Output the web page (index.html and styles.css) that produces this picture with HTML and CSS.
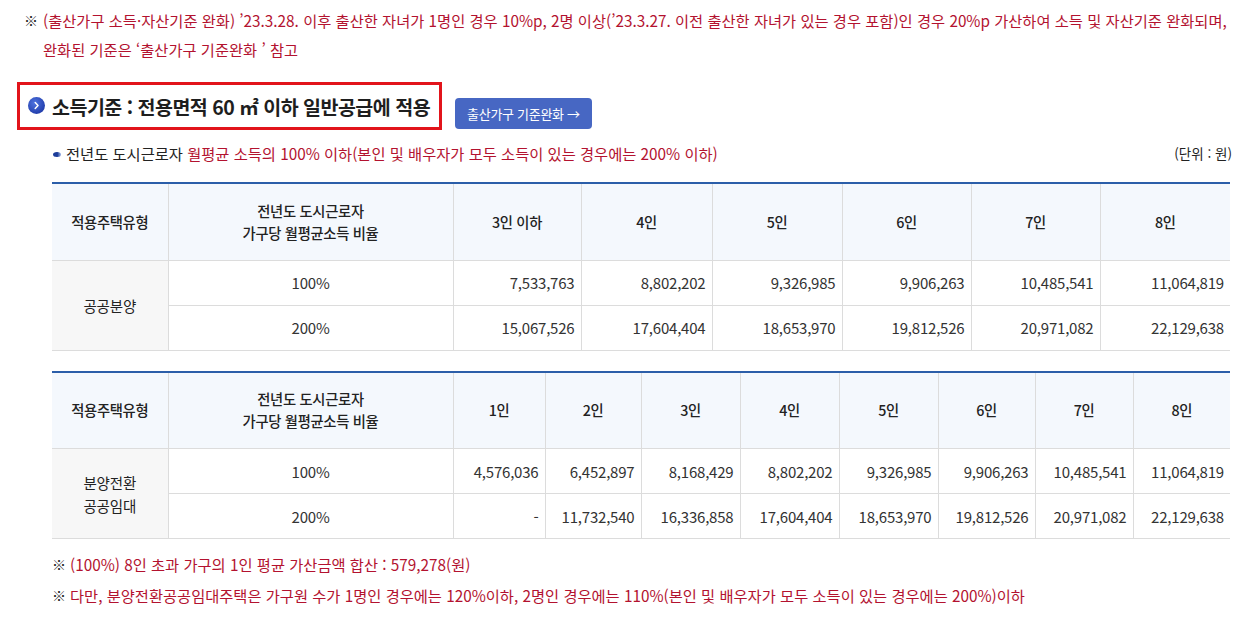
FILE: index.html
```html
<!DOCTYPE html>
<html lang="ko">
<head>
<meta charset="utf-8">
<title>소득기준</title>
<link rel="stylesheet" href="styles.css">
</head>
<body>
<div class="page">
  <div class="notice">
    <span class="mark">※</span>
    <p class="red">(출산가구 소득·자산기준 완화) ’23.3.28. 이후 출산한 자녀가 1명인 경우 10%p, 2명 이상(’23.3.27. 이전 출산한 자녀가 있는 경우 포함)인 경우 20%p 가산하여 소득 및 자산기준 완화되며,<br>완화된 기준은 ‘출산가구 기준완화 ’ 참고</p>
  </div>

  <div class="title-row">
    <div class="title-box">
      <span class="title-icon">
        <svg width="17" height="17" viewBox="0 0 17 17"><defs><radialGradient id="g" cx="40%" cy="35%" r="70%"><stop offset="0" stop-color="#4f74e0"/><stop offset="1" stop-color="#1f3aa8"/></radialGradient></defs><circle cx="8.5" cy="8.5" r="8.5" fill="url(#g)"/><path d="M7.2 5.6 L10 8.5 L7.2 11.4" fill="none" stroke="#fff" stroke-width="1.5" stroke-linecap="round" stroke-linejoin="round"/></svg>
      </span>
      <h2 class="title">소득기준 : 전용면적 60 ㎡ 이하 일반공급에 적용</h2>
    </div>
    <a class="btn" href="#">출산가구 기준완화 →</a>
  </div>

  <div class="sub-row">
    <p class="sub"><span class="dot"></span>전년도 도시근로자 <span class="red">월평균 소득의 100% 이하(본인 및 배우자가 모두 소득이 있는 경우에는 200% 이하)</span></p>
    <p class="unit">(단위 : 원)</p>
  </div>

  <table class="tbl t1">
    <colgroup>
      <col style="width:116px"><col style="width:285px"><col style="width:128px"><col style="width:131px"><col style="width:130px"><col style="width:129px"><col style="width:129px"><col style="width:130px">
    </colgroup>
    <thead>
      <tr><th>적용주택유형</th><th>전년도 도시근로자<br>가구당 월평균소득 비율</th><th>3인 이하</th><th>4인</th><th>5인</th><th>6인</th><th>7인</th><th>8인</th></tr>
    </thead>
    <tbody>
      <tr><td class="type" rowspan="2">공공분양</td><td class="ratio">100%</td><td>7,533,763</td><td>8,802,202</td><td>9,326,985</td><td>9,906,263</td><td>10,485,541</td><td>11,064,819</td></tr>
      <tr><td class="ratio">200%</td><td>15,067,526</td><td>17,604,404</td><td>18,653,970</td><td>19,812,526</td><td>20,971,082</td><td>22,129,638</td></tr>
    </tbody>
  </table>

  <table class="tbl t2">
    <colgroup>
      <col style="width:116px"><col style="width:285px"><col style="width:92px"><col style="width:96px"><col style="width:99px"><col style="width:99px"><col style="width:99px"><col style="width:97px"><col style="width:98px"><col style="width:97px">
    </colgroup>
    <thead>
      <tr><th>적용주택유형</th><th>전년도 도시근로자<br>가구당 월평균소득 비율</th><th>1인</th><th>2인</th><th>3인</th><th>4인</th><th>5인</th><th>6인</th><th>7인</th><th>8인</th></tr>
    </thead>
    <tbody>
      <tr><td class="type" rowspan="2">분양전환<br>공공임대</td><td class="ratio">100%</td><td>4,576,036</td><td>6,452,897</td><td>8,168,429</td><td>8,802,202</td><td>9,326,985</td><td>9,906,263</td><td>10,485,541</td><td>11,064,819</td></tr>
      <tr><td class="ratio">200%</td><td>-</td><td>11,732,540</td><td>16,336,858</td><td>17,604,404</td><td>18,653,970</td><td>19,812,526</td><td>20,971,082</td><td>22,129,638</td></tr>
    </tbody>
  </table>

  <ul class="notes">
    <li><span class="mark">※</span><span class="red">(100%) 8인 초과 가구의 1인 평균 가산금액 합산 : 579,278(원)</span></li>
    <li><span class="mark">※</span><span class="red">다만, 분양전환공공임대주택은 가구원 수가 1명인 경우에는 120%이하, 2명인 경우에는 110%(본인 및 배우자가 모두 소득이 있는 경우에는 200%)이하</span></li>
  </ul>
</div>
</body>
</html>
```

FILE: styles.css
```css
* { box-sizing: border-box; }
html, body { margin: 0; padding: 0; background: #fff; }
body {
  font-family: "Noto Sans CJK KR", "Noto Sans", sans-serif;
  color: #222;
  font-size: 15.3px;
  letter-spacing: 0;
}
p { margin: 0; }
.red { color: #b3122f; }

.page { padding-top: 6px; }

.notice {
  display: flex;
  padding-left: 24px;
  padding-right: 10px;
  line-height: 29px;
  white-space: nowrap;
}
.notice .mark { flex: 0 0 19px; color: #222; font-size: 14px; }

.title-row {
  display: flex;
  align-items: flex-end;
  gap: 13px;
  margin: 18px 0 0 17px;
}
.title-box {
  display: flex;
  align-items: center;
  gap: 7px;
  height: 48px;
  padding: 0 9px 0 8px;
  border: 3px solid #e2141b;
}
.title-icon { display: flex; margin-top: -1px; }
.title {
  margin: 0;
  font-size: 19.5px;
  font-weight: 700;
  letter-spacing: -0.5px;
  color: #1e1e1e;
}
.btn {
  display: inline-flex;
  align-items: center;
  height: 31px;
  padding: 0 12px;
  margin-bottom: 1px;
  background: #4767c3;
  border-radius: 4px;
  color: #fff;
  font-size: 13px;
  text-decoration: none;
  letter-spacing: -0.3px;
}

.sub-row {
  display: flex;
  justify-content: space-between;
  align-items: center;
  width: 1180px;
  margin: 11px 0 0 52px;
  line-height: 24px;
}
.dot {
  display: inline-block;
  vertical-align: middle;
  width: 8px; height: 5px;
  margin: -2px 5px 0 1px;
  border-radius: 50%;
  background: linear-gradient(90deg, #1d3d9a 55%, #9fb5e6);
}
.unit { font-size: 13.5px; color: #222; }

.tbl {
  border-collapse: collapse;
  table-layout: fixed;
  width: 1178px;
  margin-left: 52px;
  border-top: 2px solid #2b5ea9;
  color: #333;
}
.t1 { margin-top: 17px; }
.t2 { margin-top: 20px; }
.tbl th, .tbl td {
  border-left: 1px solid #dcdcdc;
  border-bottom: 1px solid #dcdcdc;
  padding: 0;
}
.tbl th:first-child, .tbl td.type { border-left: none; }
.tbl th {
  height: 77px;
  background: #f4f8fd;
  font-weight: 500;
  font-size: 14.3px;
  line-height: 22px;
  color: #222;
  letter-spacing: -0.3px;
}
.tbl td {
  height: 45px;
  text-align: right;
  padding-right: 6px;
  font-size: 15px;
  letter-spacing: -0.2px;
}
.tbl td.type {
  background: #f7f7f7;
  text-align: center;
  padding-right: 0;
  font-size: 14.5px;
  line-height: 23px;
  color: #222;
}
.tbl td.ratio { text-align: center; padding-right: 0; }

.notes {
  list-style: none;
  margin: 10px 0 0 52px;
  padding: 0;
  line-height: 31px;
  font-size: 15.3px;
}
.notes li { display: flex; }
.notes .mark { flex: 0 0 18px; font-size: 14px; color: #222; }
```
